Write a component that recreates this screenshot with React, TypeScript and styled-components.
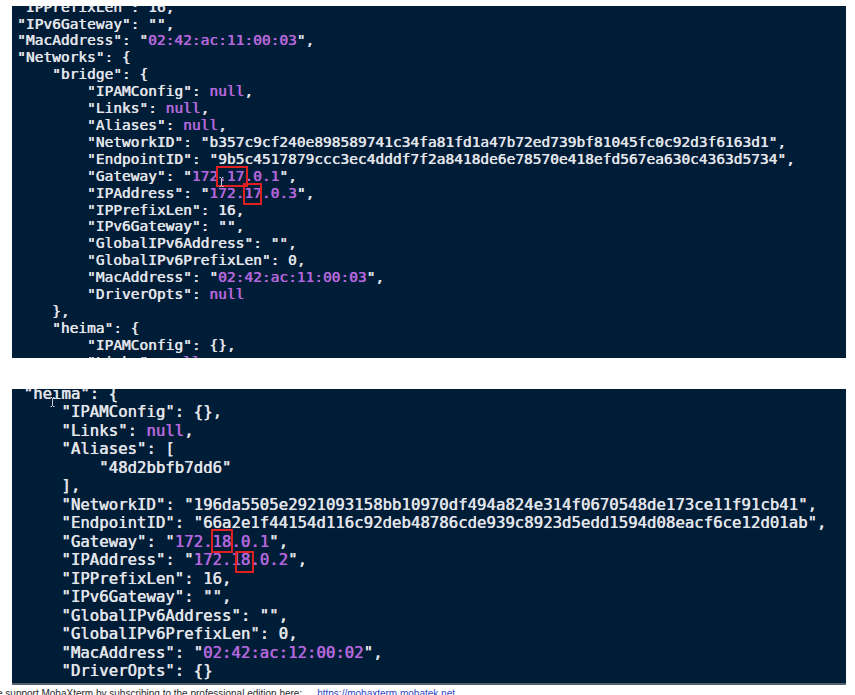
import React from "react";
import styled, { createGlobalStyle } from "styled-components";

const GlobalStyle = createGlobalStyle`
  html, body {
    margin: 0;
    padding: 0;
    background: #ffffff;
  }
  body {
    width: 855px;
    height: 695px;
    overflow: hidden;
  }
`;

type Box = { l: number; r: number; t: number; b: number };
type Seg = { text: string; purple: boolean; boxed: boolean };

function parse(line: string): Seg[] {
  const segs: Seg[] = [];
  let purple = false;
  let boxed = false;
  let buf = "";
  for (const ch of line) {
    if (ch === "%" || ch === "#") {
      if (buf) segs.push({ text: buf, purple, boxed });
      buf = "";
      if (ch === "%") purple = !purple;
      else boxed = !boxed;
    } else {
      buf += ch;
    }
  }
  if (buf) segs.push({ text: buf, purple, boxed });
  return segs;
}

const topLines = [
  `"IPPrefixLen": 16,`,
  `"IPv6Gateway": "",`,
  `"MacAddress": "%02:42:ac:11:00:03%",`,
  `"Networks": {`,
  `    "bridge": {`,
  `        "IPAMConfig": %null%,`,
  `        "Links": %null%,`,
  `        "Aliases": %null%,`,
  `        "NetworkID": "b357c9cf240e898589741c34fa81fd1a47b72ed739bf81045fc0c92d3f6163d1",`,
  `        "EndpointID": "9b5c4517879ccc3ec4dddf7f2a8418de6e78570e418efd567ea630c4363d5734",`,
  `        "Gateway": "%172#.17#.0.1%",`,
  `        "IPAddress": "%172.#17#.0.3%",`,
  `        "IPPrefixLen": 16,`,
  `        "IPv6Gateway": "",`,
  `        "GlobalIPv6Address": "",`,
  `        "GlobalIPv6PrefixLen": 0,`,
  `        "MacAddress": "%02:42:ac:11:00:03%",`,
  `        "DriverOpts": %null%`,
  `    },`,
  `    "heima": {`,
  `        "IPAMConfig": {},`,
  `        "Links": %null%,`,
];

const bottomLines = [
  `"heima": {`,
  `    "IPAMConfig": {},`,
  `    "Links": %null%,`,
  `    "Aliases": [`,
  `        "48d2bbfb7dd6"`,
  `    ],`,
  `    "NetworkID": "196da5505e2921093158bb10970df494a824e314f0670548de173ce11f91cb41",`,
  `    "EndpointID": "66a2e1f44154d116c92deb48786cde939c8923d5edd1594d08eacf6ce12d01ab",`,
  `    "Gateway": "%172.#18#.0.1%",`,
  `    "IPAddress": "%172.#18#.0.2%",`,
  `    "IPPrefixLen": 16,`,
  `    "IPv6Gateway": "",`,
  `    "GlobalIPv6Address": "",`,
  `    "GlobalIPv6PrefixLen": 0,`,
  `    "MacAddress": "%02:42:ac:12:00:02%",`,
  `    "DriverOpts": {}`,
];

const topBoxes: Box[] = [
  { l: 2, r: 3.5, t: 1.7, b: 3.7 },
  { l: 1.5, r: 0.7, t: 1.3, b: 4.2 },
];

const bottomBoxes: Box[] = [
  { l: 1, r: 1.3, t: 2.7, b: 2.7 },
  { l: -4, r: 4.2, t: -0.7, b: 4.2 },
];

const Page = styled.div`
  display: flex;
  flex-direction: column;
  width: 855px;
  height: 695px;
  overflow: hidden;
  background: #ffffff;
`;

const Shots = styled.div`
  display: flex;
  flex-direction: column;
  gap: 31px;
  padding: 6px 9px 0 12px;
`;

const Terminal = styled.div<{
  $height: number;
  $fontSize: number;
  $lineHeight: number;
  $padLeft: number;
  $rule?: boolean;
}>`
  position: relative;
  box-sizing: content-box;
  height: ${(p) => p.$height}px;
  overflow: hidden;
  background: #001d38;
  padding-left: ${(p) => p.$padLeft}px;
  font-family: "DejaVu Sans Mono", monospace;
  font-size: ${(p) => p.$fontSize}px;
  line-height: ${(p) => p.$lineHeight}px;
  color: #e2e5ea;
  border-bottom: ${(p) => (p.$rule ? "2px solid #56606b" : "none")};
`;

const Code = styled.div<{ $shift: number }>`
  display: flex;
  flex-direction: column;
  margin-top: ${(p) => p.$shift}px;
  white-space: pre;
`;

const Line = styled.div`
  white-space: pre;
`;

const Token = styled.span<{ $purple: boolean }>`
  color: ${(p) => (p.$purple ? "#b465dd" : "#e2e5ea")};
  text-shadow: 0.45px 0 0 currentColor, 0 0 1px rgba(200, 205, 220, 0.25);
`;

const Mark = styled.span<{ $box: Box }>`
  position: relative;
  &::after {
    content: "";
    position: absolute;
    left: ${(p) => -p.$box.l}px;
    right: ${(p) => -p.$box.r}px;
    top: ${(p) => -p.$box.t}px;
    bottom: ${(p) => -p.$box.b}px;
    border: 2px solid #de2020;
    box-sizing: border-box;
  }
`;

const Cursor = styled.svg<{ $x: number; $y: number }>`
  position: absolute;
  left: ${(p) => p.$x}px;
  top: ${(p) => p.$y}px;
  width: 5px;
  height: 10px;
`;

const StatusBar = styled.div`
  display: flex;
  gap: 15px;
  margin-left: -3px;
  padding-top: 3px;
  font-family: "Liberation Sans", Arial, sans-serif;
  font-size: 10px;
  line-height: 12px;
  color: #2c2c2c;
  white-space: nowrap;
`;

const StatusLink = styled.span`
  color: #2f47c4;
`;

function CodeBlock({ lines, boxes, shift }: { lines: string[]; boxes: Box[]; shift: number }) {
  let boxIndex = 0;
  return (
    <Code $shift={shift}>
      {lines.map((line, i) => (
        <Line key={i}>
          {parse(line).map((seg, j) => {
            const tok = (
              <Token key={j} $purple={seg.purple}>
                {seg.text}
              </Token>
            );
            if (seg.boxed) {
              const box = boxes[boxIndex++];
              return (
                <Mark key={j} $box={box}>
                  {tok}
                </Mark>
              );
            }
            return tok;
          })}
        </Line>
      ))}
    </Code>
  );
}

function IBeam({ x, y }: { x: number; y: number }) {
  return (
    <Cursor $x={x} $y={y} viewBox="0 0 5 10">
      <path d="M0.5 0.5 H2 M3 0.5 H4.5 M2.5 1 V9 M0.5 9.5 H2 M3 9.5 H4.5" stroke="#c9ccd2" strokeWidth="1" fill="none" />
    </Cursor>
  );
}

export default function App() {
  return (
    <Page>
      <GlobalStyle />
      <Shots>
        <Terminal $height={352} $fontSize={14.53} $lineHeight={16.9} $padLeft={5}>
          <CodeBlock lines={topLines} boxes={topBoxes} shift={-7.35} />
          <IBeam x={207} y={171} />
        </Terminal>
        <Terminal $height={294} $fontSize={15.7} $lineHeight={18.53} $padLeft={11.5} $rule>
          <CodeBlock lines={bottomLines} boxes={bottomBoxes} shift={-4.5} />
          <IBeam x={38} y={8} />
        </Terminal>
      </Shots>
      <StatusBar>
        <span>e support MobaXterm by subscribing to the professional edition here:</span>
        <StatusLink>https://mobaxterm.mobatek.net</StatusLink>
      </StatusBar>
    </Page>
  );
}
